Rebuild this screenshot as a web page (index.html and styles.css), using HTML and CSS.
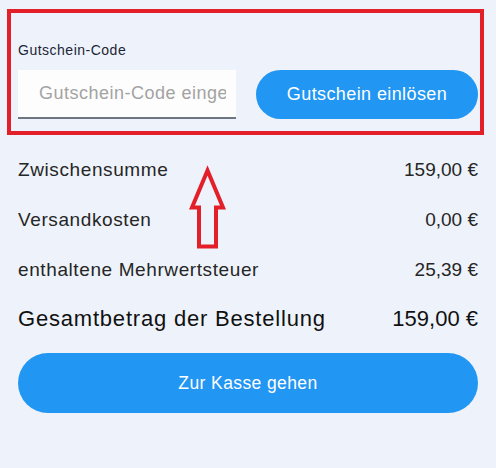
FILE: index.html
```html
<!DOCTYPE html>
<html lang="de">
  <head>
    <meta charset="UTF-8" />
    <meta name="viewport" content="width=device-width, initial-scale=1.0" />
    <title>Warenkorb</title>
    <link rel="stylesheet" href="styles.css">
  </head>
  <body>
    <div class="cart">
      <div class="coupon">
        <label for="couponCode">Gutschein-Code</label>
        <div class="coupon-row">
          <input type="text" id="couponCode" name="couponCode" placeholder="Gutschein-Code eingeben" />
          <button type="button" class="btn">Gutschein einlösen</button>
        </div>
      </div>

      <div class="summary">
        <div class="row">
          <span>Zwischensumme</span>
          <span class="value">159,00 €</span>
        </div>
        <div class="row">
          <span>Versandkosten</span>
          <span class="value">0,00 €</span>
        </div>
        <div class="row">
          <span>enthaltene Mehrwertsteuer</span>
          <span class="value">25,39 €</span>
        </div>
        <div class="row total">
          <span>Gesamtbetrag der Bestellung</span>
          <span class="value">159,00 €</span>
        </div>
        <button type="button" class="btn checkout">Zur Kasse gehen</button>
      </div>

      <svg class="arrow" width="40" height="86" viewBox="188 156 40 86">
        <polygon points="207.5,161.5 192,198.5 199,198.5 199,237.5 216,237.5 216,198.5 223,198.5"
          fill="none" stroke="#e3202a" stroke-width="4" stroke-linejoin="miter" />
      </svg>
    </div>
  </body>
</html>
```

FILE: styles.css
```css
body {
  font-family: "Liberation Sans", Arial, sans-serif;
  background-color: #eef3fb;
  color: #222;
  margin: 0;
}
.cart {
  position: relative;
  width: 496px;
  height: 468px;
}
.coupon {
  margin: 9px 12px 0 7px;
  border: 4px solid #e3202a;
  padding: 29px 2px 12px 7px;
}
.coupon label {
  display: block;
  font-size: 14px;
  letter-spacing: 0.5px;
  color: #1c2536;
  margin-bottom: 12px;
}
.coupon-row {
  display: flex;
  gap: 20px;
}
.coupon-row input {
  width: 218px;
  height: 49px;
  box-sizing: border-box;
  border: none;
  border-bottom: 2px solid #6f7683;
  background: #fdfdfd;
  padding: 0 10px 0 21px;
  font-family: inherit;
  font-size: 18px;
  letter-spacing: 0.5px;
  color: #333;
  outline: none;
}
.coupon-row input::placeholder {
  color: #a3a3a3;
}
.btn {
  border: none;
  background-color: #2196f3;
  color: #fff;
  font-family: inherit;
  cursor: pointer;
}
.coupon-row .btn {
  flex: 1;
  height: 49px;
  border-radius: 25px;
  font-size: 18px;
  letter-spacing: 0.4px;
}
.summary {
  padding: 10px 18px 0;
}
.row {
  display: flex;
  justify-content: space-between;
  height: 50px;
  line-height: 50px;
  font-size: 19px;
  letter-spacing: 0.6px;
  color: #262626;
}
.row .value {
  letter-spacing: 0;
}
.total {
  height: 48px;
  line-height: 48px;
  font-size: 22px;
  letter-spacing: 0.8px;
  color: #111;
}
.checkout {
  display: block;
  width: 100%;
  height: 60px;
  margin-top: 10px;
  border-radius: 30px;
  font-size: 17.5px;
  letter-spacing: 0.4px;
}
.arrow {
  position: absolute;
  left: 188px;
  top: 156px;
}
```
